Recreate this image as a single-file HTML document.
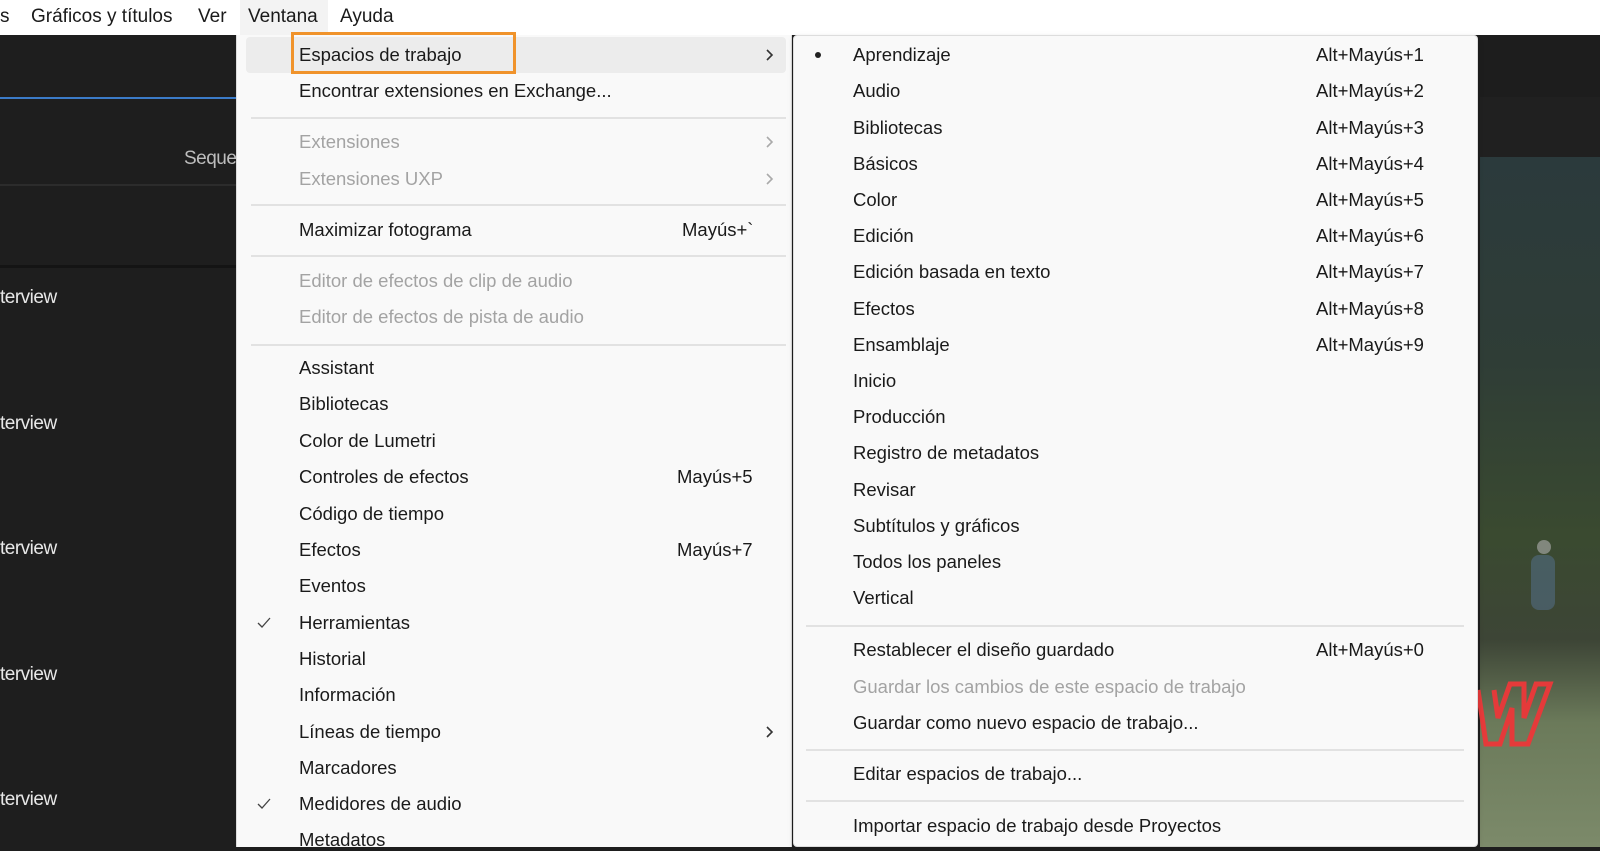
<!DOCTYPE html>
<html><head><meta charset="utf-8"><style>
*{margin:0;padding:0;box-sizing:border-box}
body{width:1600px;height:847px;overflow:hidden;position:relative;background:#1e1e1e;font-family:"Liberation Sans",sans-serif;font-size:18.5px;color:#1a1a1a}
.a{position:absolute;white-space:nowrap;line-height:22px}
.t{transform:translateY(-11px)}
.g{color:#a3a3a3}
.w{color:#e8e8e8;font-size:19px;letter-spacing:-0.5px}
.sep{position:absolute;height:2px;background:#e2e2e2}
</style></head><body>
<div class="a" style="left:0;top:97px;width:240px;height:2px;background:#3b7bc8"></div>
<div class="a" style="left:0;top:184px;width:240px;height:2px;background:#2c2c2c"></div>
<div class="a" style="left:0;top:265px;width:240px;height:3px;background:#141414"></div>
<div class="a w t" style="left:184px;top:159px;color:#bdbdbd">Seque</div>
<div class="a w t" style="left:0;top:298px">terview</div>
<div class="a w t" style="left:0;top:424px">terview</div>
<div class="a w t" style="left:0;top:549px">terview</div>
<div class="a w t" style="left:0;top:675px">terview</div>
<div class="a w t" style="left:0;top:800px">terview</div>
<div class="a" style="left:1480px;top:35px;width:120px;height:62px;background:#1d1d1d"></div>
<div class="a" style="left:1480px;top:97px;width:120px;height:60px;background:#202020"></div>
<div class="a" style="left:1480px;top:157px;width:120px;height:690px;background:linear-gradient(180deg,#2b3a3c 0%,#2f3d36 30%,#3a4a30 55%,#3d4536 70%,#6b7a5a 82%,#7c8a6a 100%)"></div>
<svg class="a" style="left:1478px;top:0" width="122" height="847">
<rect x="53" y="555" width="24" height="55" rx="8" fill="#54708a" opacity=".55"/>
<circle cx="66" cy="547" r="7" fill="#b0b0b0" opacity=".6"/>
<path d="M0 690 L8 744 L22 744 L34 708 L34 744 L50 744 L72 684 L58 684 L46 718 L46 684 L32 684 L20 718 L16 690" fill="none" stroke="#e53a3a" stroke-width="5" stroke-linejoin="miter"/>
</svg>
<div class="a" style="left:0;top:0;width:1600px;height:35px;background:#fff"></div>
<div class="a" style="left:240px;top:0;width:88px;height:35px;background:#f3f3f3"></div>
<div class="a" style="left:0;top:6px;font-size:19px">s</div>
<div class="a" style="left:31px;top:6px;font-size:19px">Gráficos y títulos</div>
<div class="a" style="left:198px;top:6px;font-size:19px">Ver</div>
<div class="a" style="left:248px;top:6px;font-size:19px">Ventana</div>
<div class="a" style="left:340px;top:6px;font-size:19px">Ayuda</div>
<div class="a" style="left:236px;top:35px;width:556px;height:812px;background:#f9f9f9;border-left:1px solid #ddd;border-right:1px solid #ddd"></div>
<div class="a" style="left:246px;top:37px;width:540px;height:36px;background:#ececec;border-radius:4px"></div>
<div class="a" style="left:291px;top:32px;width:225px;height:42px;border:3px solid #f0932b"></div>
<div class="a t" style="left:299px;top:55px">Espacios de trabajo</div>
<div class="a t" style="left:299px;top:91px">Encontrar extensiones en Exchange...</div>
<div class="sep" style="left:251px;top:117px;width:535px"></div>
<div class="a t g" style="left:299px;top:142px">Extensiones</div>
<div class="a t g" style="left:299px;top:179px">Extensiones UXP</div>
<div class="sep" style="left:251px;top:204px;width:535px"></div>
<div class="a t" style="left:299px;top:230px">Maximizar fotograma</div>
<div class="a t" style="left:682px;top:230px">Mayús+`</div>
<div class="sep" style="left:251px;top:255px;width:535px"></div>
<div class="a t g" style="left:299px;top:281px">Editor de efectos de clip de audio</div>
<div class="a t g" style="left:299px;top:317px">Editor de efectos de pista de audio</div>
<div class="sep" style="left:251px;top:344px;width:535px"></div>
<div class="a t" style="left:299px;top:368px">Assistant</div>
<div class="a t" style="left:299px;top:404px">Bibliotecas</div>
<div class="a t" style="left:299px;top:441px">Color de Lumetri</div>
<div class="a t" style="left:299px;top:477px">Controles de efectos</div>
<div class="a t" style="left:677px;top:477px">Mayús+5</div>
<div class="a t" style="left:299px;top:514px">Código de tiempo</div>
<div class="a t" style="left:299px;top:550px">Efectos</div>
<div class="a t" style="left:677px;top:550px">Mayús+7</div>
<div class="a t" style="left:299px;top:586px">Eventos</div>
<div class="a t" style="left:299px;top:623px">Herramientas</div>
<div class="a t" style="left:299px;top:659px">Historial</div>
<div class="a t" style="left:299px;top:695px">Información</div>
<div class="a t" style="left:299px;top:732px">Líneas de tiempo</div>
<div class="a t" style="left:299px;top:768px">Marcadores</div>
<div class="a t" style="left:299px;top:804px">Medidores de audio</div>
<div class="a t" style="left:299px;top:840px">Metadatos</div>
<svg class="a" style="left:0;top:0" width="800" height="847" fill="none" stroke-width="1.6">
<g stroke="#333"><path d="M767 50l5 5-5 5"/><path d="M767 727l5 5-5 5"/></g>
<g stroke="#aaa"><path d="M767 137l5 5-5 5"/><path d="M767 174l5 5-5 5"/></g>
<g stroke="#444" stroke-width="1.3"><path d="M258 623l4 4 8-9"/><path d="M258 804l4 4 8-9"/></g>
</svg>
<div class="a" style="left:793px;top:35px;width:685px;height:812px;background:#f9f9f9;border:1px solid #ddd;border-radius:4px;box-shadow:0 2px 6px rgba(0,0,0,.15)"></div>
<div class="a" style="left:815px;top:52px;width:6px;height:6px;border-radius:3px;background:#222"></div>
<div class="a t" style="left:853px;top:55px">Aprendizaje</div>
<div class="a t" style="left:853px;top:91px">Audio</div>
<div class="a t" style="left:853px;top:128px">Bibliotecas</div>
<div class="a t" style="left:853px;top:164px">Básicos</div>
<div class="a t" style="left:853px;top:200px">Color</div>
<div class="a t" style="left:853px;top:236px">Edición</div>
<div class="a t" style="left:853px;top:272px">Edición basada en texto</div>
<div class="a t" style="left:853px;top:309px">Efectos</div>
<div class="a t" style="left:853px;top:345px">Ensamblaje</div>
<div class="a t" style="left:853px;top:381px">Inicio</div>
<div class="a t" style="left:853px;top:417px">Producción</div>
<div class="a t" style="left:853px;top:453px">Registro de metadatos</div>
<div class="a t" style="left:853px;top:490px">Revisar</div>
<div class="a t" style="left:853px;top:526px">Subtítulos y gráficos</div>
<div class="a t" style="left:853px;top:562px">Todos los paneles</div>
<div class="a t" style="left:853px;top:598px">Vertical</div>
<div class="a t" style="left:1316px;top:55px">Alt+Mayús+1</div>
<div class="a t" style="left:1316px;top:91px">Alt+Mayús+2</div>
<div class="a t" style="left:1316px;top:128px">Alt+Mayús+3</div>
<div class="a t" style="left:1316px;top:164px">Alt+Mayús+4</div>
<div class="a t" style="left:1316px;top:200px">Alt+Mayús+5</div>
<div class="a t" style="left:1316px;top:236px">Alt+Mayús+6</div>
<div class="a t" style="left:1316px;top:272px">Alt+Mayús+7</div>
<div class="a t" style="left:1316px;top:309px">Alt+Mayús+8</div>
<div class="a t" style="left:1316px;top:345px">Alt+Mayús+9</div>
<div class="sep" style="left:806px;top:625px;width:658px"></div>
<div class="a t" style="left:853px;top:650px">Restablecer el diseño guardado</div>
<div class="a t" style="left:1316px;top:650px">Alt+Mayús+0</div>
<div class="a t g" style="left:853px;top:687px">Guardar los cambios de este espacio de trabajo</div>
<div class="a t" style="left:853px;top:723px">Guardar como nuevo espacio de trabajo...</div>
<div class="sep" style="left:806px;top:749px;width:658px"></div>
<div class="a t" style="left:853px;top:774px">Editar espacios de trabajo...</div>
<div class="sep" style="left:806px;top:800px;width:658px"></div>
<div class="a t" style="left:853px;top:826px">Importar espacio de trabajo desde Proyectos</div>
</body></html>
